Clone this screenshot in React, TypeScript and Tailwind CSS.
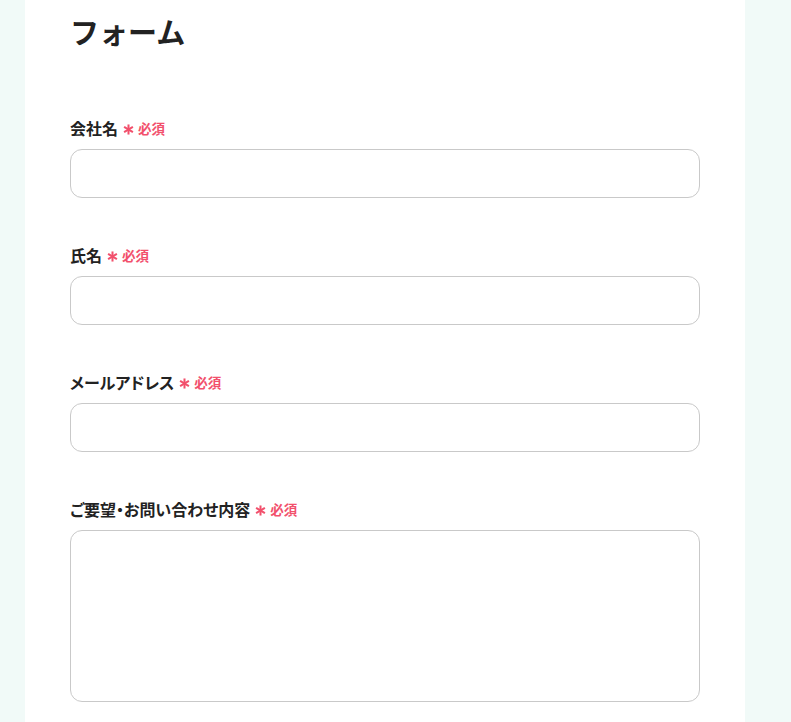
const fields = [
  { label: "会社名", type: "input" },
  { label: "氏名", type: "input" },
  { label: "メールアドレス", type: "input" },
  { label: "ご要望・お問い合わせ内容", type: "textarea" },
];

function Asterisk() {
  return (
    <svg width="11" height="11" viewBox="0 0 12 12" className="mr-[4px] translate-y-[1px]">
      <g stroke="#f2506c" strokeWidth="2.2" strokeLinecap="butt">
        <line x1="6" y1="0.5" x2="6" y2="11.5" />
        <line x1="1.2" y1="3.2" x2="10.8" y2="8.8" />
        <line x1="1.2" y1="8.8" x2="10.8" y2="3.2" />
      </g>
    </svg>
  );
}

function Field({ label, type }: { label: string; type: string }) {
  return (
    <div className="mb-[46px]">
      <label className="flex items-center h-[22px] mb-[10px] text-[16px] font-bold leading-[22px] text-[#222] [font-feature-settings:'palt']">
        {label}
        <span className="ml-[5px] text-[#f2506c] text-[13.5px] font-bold flex items-center">
          <Asterisk />
          必須
        </span>
      </label>
      {type === "input" ? (
        <input
          type="text"
          className="block w-[630px] h-[49px] rounded-[12px] border border-[#c9c9c9] bg-white px-4 outline-none"
        />
      ) : (
        <textarea className="block w-[630px] h-[172px] rounded-[12px] border border-[#c9c9c9] bg-white px-4 py-3 outline-none resize-none" />
      )}
    </div>
  );
}

export default function App() {
  return (
    <div
      className="min-h-screen h-[722px] overflow-hidden bg-[#f1faf8] pl-[25px]"
      style={{ fontFamily: '"Noto Sans CJK JP", "Noto Sans", sans-serif' }}
    >
      <div className="w-[720px] h-full bg-white pl-[45px] pt-[9px]">
        <h1 className="text-[29px] font-bold leading-[44px] text-[#222] mb-[64px]">
          フォーム
        </h1>
        {fields.map((f) => (
          <Field key={f.label} label={f.label} type={f.type} />
        ))}
      </div>
    </div>
  );
}
